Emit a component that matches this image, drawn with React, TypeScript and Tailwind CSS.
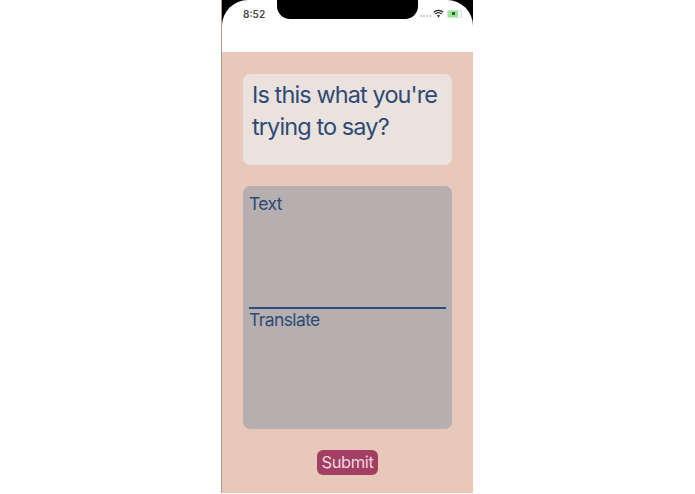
export default function App() {
  return (
    <main className="flex h-[494px] w-[695px] overflow-hidden bg-white pl-[221px] font-['Inter','Liberation_Sans',sans-serif]">
      <div className="relative flex h-[493px] w-[252px] flex-col border-l border-[#a89c92] bg-black">
        {/* status bar, with the notch on top */}
        <div className="relative h-[52px] shrink-0 rounded-t-[26px] bg-white">
          <div className="absolute left-[55px] top-0 h-[19px] w-[141px] rounded-b-[13px] bg-black" />
          <span className="absolute left-[21px] top-[8px] text-[10px] font-semibold leading-[13px] text-[#444]">8:52</span>
          <div className="absolute left-[198px] top-[9px] flex items-center gap-[2px]">
            <div className="mt-[4px] flex w-[11px] gap-px">
              <span className="h-[2px] w-[2px] rounded-full bg-[#bcbcbc]" />
              <span className="h-[2px] w-[2px] rounded-full bg-[#bcbcbc]" />
              <span className="h-[2px] w-[2px] rounded-full bg-[#bcbcbc]" />
              <span className="h-[2px] w-[2px] rounded-full bg-[#bcbcbc]" />
            </div>
            <svg width="11" height="9" viewBox="0 0 11 9" className="text-[#222]">
              <path d="M0.8 3.2a7 7 0 0 1 9.4 0M2.4 5a4.6 4.6 0 0 1 6.2 0" fill="none" stroke="currentColor" strokeWidth="1.3" />
              <path d="M3.9 6.6a2.4 2.4 0 0 1 3.2 0L5.5 8.4z" fill="currentColor" />
            </svg>
            <div className="ml-[1px] flex h-[8px] w-[15px] items-center rounded-[2px] border border-[#cfe8cc]">
              <div className="flex h-full w-[10px] items-center justify-center rounded-[1px] bg-[#9be396]">
                <span className="h-[3px] w-[3px] bg-[#2f5f30]" />
              </div>
            </div>
          </div>
        </div>

        <div className="flex flex-1 flex-col items-center bg-[#e8c8b8] px-[21px] pt-[22px]">
          <div className="h-[91px] w-full rounded-[7px] bg-[#ebe2dd] px-[9px] py-[5px]">
            <h1 className="text-[23.5px] font-normal leading-[32px] tracking-[-0.9px] text-[#2d4a76]">
              Is this what you're trying to say?
            </h1>
          </div>

          <div className="mt-[21px] flex h-[243px] w-full flex-col rounded-[7px] bg-[#b6afb0] px-[6px] pt-[7px]">
            <div className="h-[116px] border-b-2 border-[#2f4b7c] text-[17.5px] leading-[22px] tracking-[-0.6px] text-[#2d4a76]">Text</div>
            <div className="text-[17.5px] leading-[22px] tracking-[-0.6px] text-[#2d4a76]">Translate</div>
          </div>

          <button className="mt-[21px] h-[25px] w-[61px] rounded-[6px] bg-[#a23f63] text-[16.5px] leading-[23px] tracking-[-0.4px] text-[#f0d5dc]">
            Submit
          </button>
        </div>
      </div>
    </main>
  );
}
